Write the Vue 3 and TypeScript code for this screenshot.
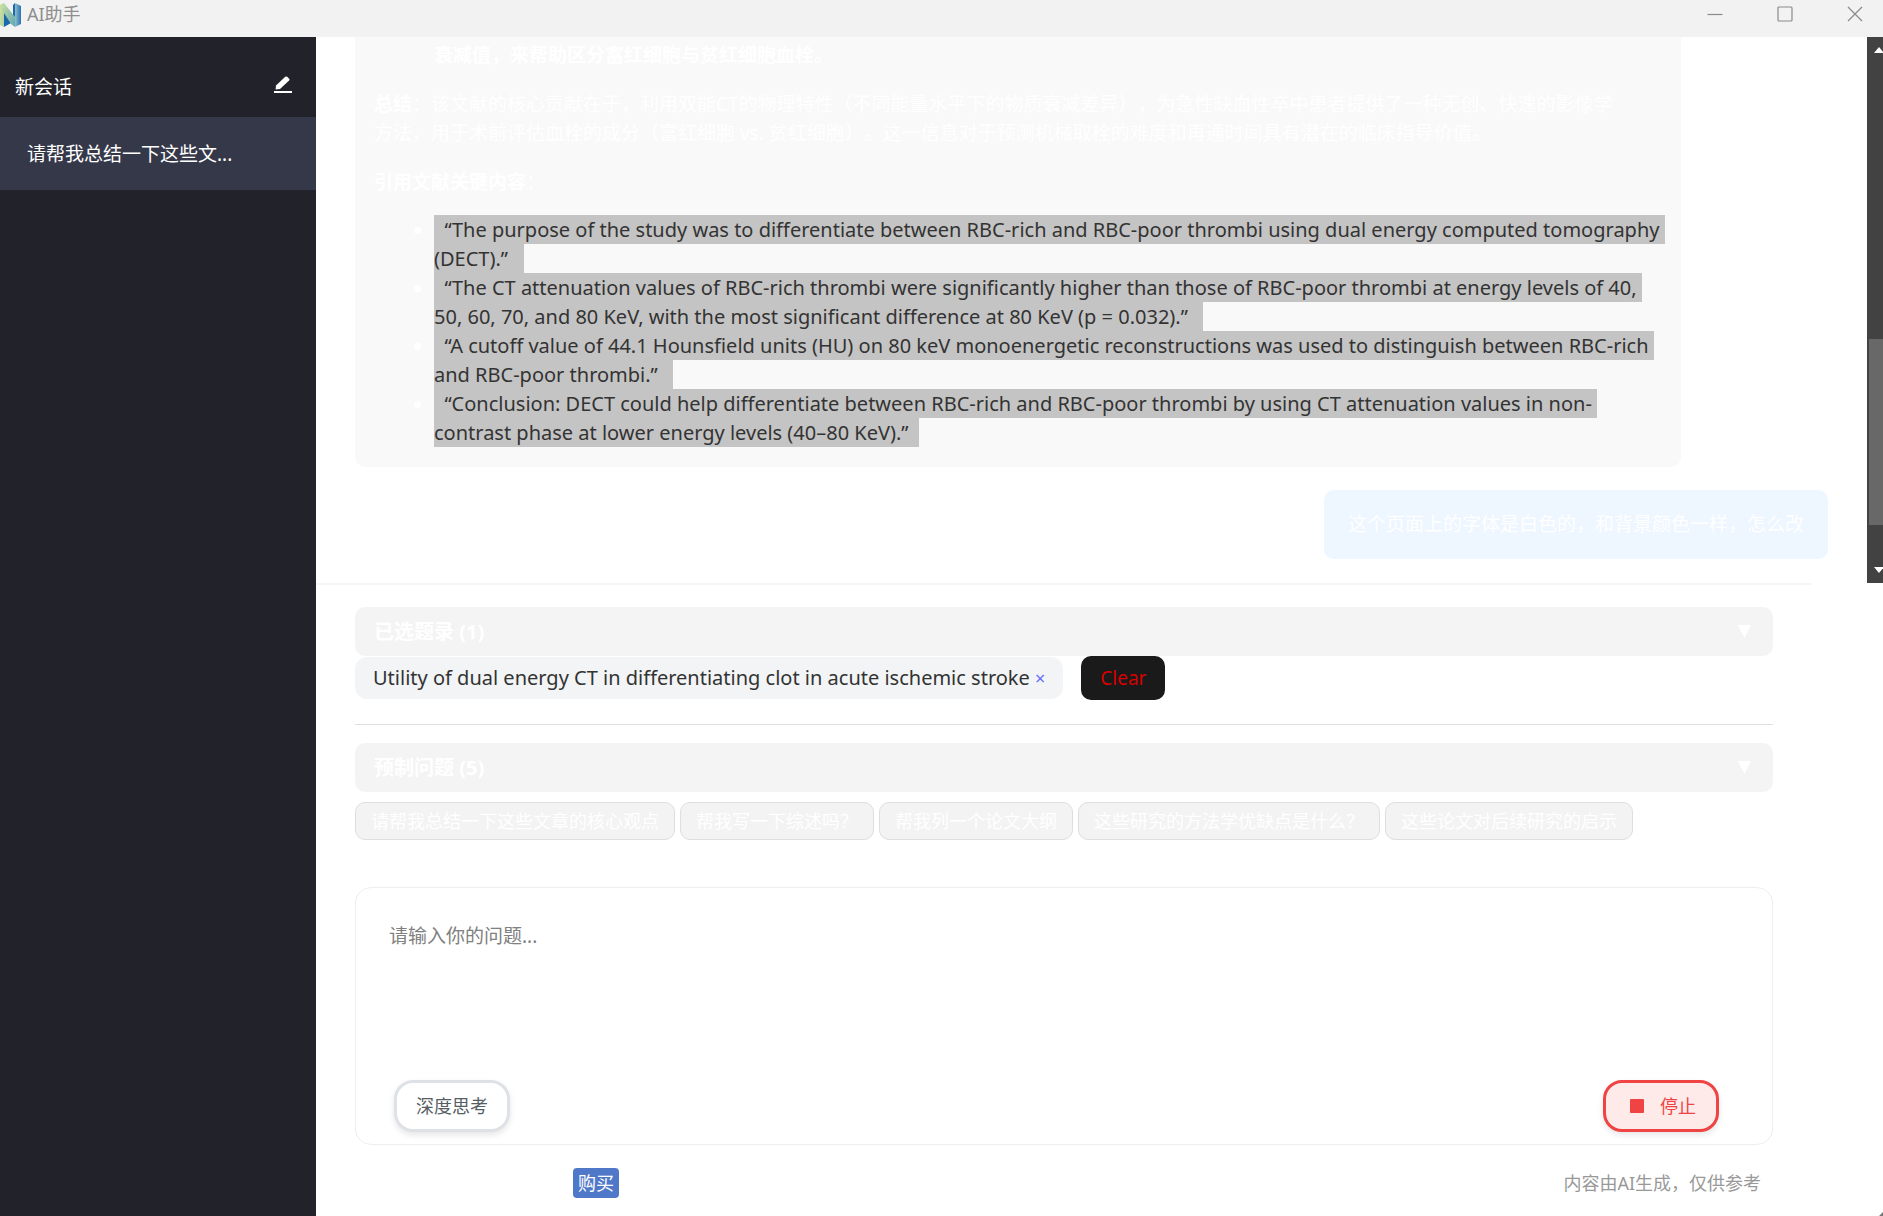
<script setup lang="ts">
import { ref } from 'vue'

interface Quote {
  lines: string[]
}

const nb = '\u00a0'

const quotes: Quote[] = [
  {
    lines: [
      `${nb}${nb}“The purpose of the study was to differentiate between RBC-rich and RBC-poor thrombi using dual energy computed tomography${nb}`,
      `(DECT).”${nb}${nb}${nb}`,
    ],
  },
  {
    lines: [
      `${nb}${nb}“The CT attenuation values of RBC-rich thrombi were significantly higher than those of RBC-poor thrombi at energy levels of 40,${nb}`,
      `50, 60, 70, and 80 KeV, with the most significant difference at 80 KeV (p = 0.032).”${nb}${nb}${nb}`,
    ],
  },
  {
    lines: [
      `${nb}${nb}“A cutoff value of 44.1 Hounsfield units (HU) on 80 keV monoenergetic reconstructions was used to distinguish between RBC-rich${nb}`,
      `and RBC-poor thrombi.”${nb}${nb}${nb}`,
    ],
  },
  {
    lines: [
      `${nb}${nb}“Conclusion: DECT could help differentiate between RBC-rich and RBC-poor thrombi by using CT attenuation values in non-${nb}`,
      `contrast phase at lower energy levels (40–80 KeV).”${nb}${nb}`,
    ],
  },
]

const presets: string[] = [
  '请帮我总结一下这些文章的核心观点',
  '帮我写一下综述吗？',
  '帮我列一个论文大纲',
  '这些研究的方法学优缺点是什么？',
  '这些论文对后续研究的启示',
]

const question = ref('')
</script>

<template>
  <div class="window">
    <header class="titlebar">
      <svg class="logo" width="21" height="26" viewBox="0 0 21 26" aria-hidden="true">
        <defs>
          <linearGradient id="lg-left" x1="0" y1="0" x2="1" y2="1">
            <stop offset="0" stop-color="#d3e3a0" />
            <stop offset="1" stop-color="#a9d0a2" />
          </linearGradient>
          <linearGradient id="lg-diag" x1="0" y1="0" x2="1" y2="1">
            <stop offset="0" stop-color="#cfe2a2" />
            <stop offset="1" stop-color="#5fa8b4" />
          </linearGradient>
          <linearGradient id="lg-right" x1="0" y1="0" x2="1" y2="0">
            <stop offset="0" stop-color="#8fc0c8" />
            <stop offset="1" stop-color="#2a72b5" />
          </linearGradient>
        </defs>
        <path d="M4 10 L11 18 L11 22 L4 26 Z" fill="#1c68ad" />
        <path d="M13 4 L15 2 L15 16 L13 15 Z" fill="#1c68ad" />
        <path d="M0 4 L4 2 L4 26 L0 24 Z" fill="url(#lg-left)" />
        <path d="M0 4 L4 2 L15 16 L15 26 L11 23 L4 12 Z" fill="url(#lg-diag)" />
        <path d="M15 2 L21 5 L21 23 L15 26 Z" fill="url(#lg-right)" />
      </svg>
      <h1>AI助手</h1>
      <div class="win-controls">
        <button type="button" aria-label="最小化">
          <svg width="16" height="16" viewBox="0 0 16 16"><path d="M0.5 8.5 H15.5" /></svg>
        </button>
        <button type="button" aria-label="最大化">
          <svg width="16" height="16" viewBox="0 0 16 16"><rect x="1" y="1" width="14" height="14" rx="1" /></svg>
        </button>
        <button type="button" aria-label="关闭">
          <svg width="16" height="16" viewBox="0 0 16 16"><path d="M1 1 L15 15 M15 1 L1 15" /></svg>
        </button>
      </div>
    </header>

    <div class="body">
      <aside class="sidebar">
        <div class="new-chat">
          <span>新会话</span>
          <button type="button" aria-label="新建会话">
            <svg width="20" height="20" viewBox="0 0 20 20">
              <path d="M3 10.5 L12.2 1.8 Q13.2 1 14.2 1.8 L16.2 3.7 Q17 4.6 16.1 5.5 L7 14 L2.6 14.4 Z" />
              <rect x="1" y="16" width="18" height="2" />
            </svg>
          </button>
        </div>
        <a class="session" href="#session">请帮我总结一下这些文...</a>
      </aside>

      <main class="main">
        <section class="chat">
          <div class="messages">
            <article class="assistant">
              <p class="cont"><strong>衰减值，来帮助区分富红细胞与贫红细胞血栓。</strong></p>
              <p>
                <strong>总结</strong>：该文献的核心贡献在于，利用双能CT的物理特性（不同能量水平下的物质衰减差异），为急性缺血性卒中患者提供了一种无创、快速的影像学<br />方法，用于术前评估血栓的成分（富红细胞 vs. 贫红细胞）。这一信息对于预测机械取栓的难度和再通时间具有潜在的临床指导价值。
              </p>
              <p class="list-title"><strong>引用文献关键内容</strong>：</p>
              <ul>
                <li v-for="(q, i) in quotes" :key="i">
                  <span v-for="line in q.lines" :key="line" class="selected">{{ line }}</span>
                </li>
              </ul>
            </article>
            <article class="user">这个页面上的字体是白色的，和背景颜色一样，怎么改</article>
          </div>
          <div class="scrollbar" aria-hidden="true">
            <svg class="arrow" width="16" height="24" viewBox="0 0 16 24"><path d="M7 16 L12 10 L17 16 Z" /></svg>
            <div class="track"><div class="thumb"></div></div>
            <svg class="arrow" width="16" height="24" viewBox="0 0 16 24"><path d="M7 8 L12 14 L17 8 Z" /></svg>
          </div>
        </section>

        <section class="composer">
          <div class="divider"></div>
          <div class="panel-head">
            <strong>已选题录 (1)</strong>
            <svg width="13" height="13" viewBox="0 0 13 13" aria-hidden="true"><path d="M0 0 H13 L6.5 13 Z" /></svg>
          </div>
          <div class="records">
            <span class="tag">
              Utility of dual energy CT in differentiating clot in acute ischemic stroke
              <a href="#remove" aria-label="移除">×</a>
            </span>
            <button type="button" class="clear">Clear</button>
          </div>
          <hr />
          <div class="panel-head">
            <strong>预制问题 (5)</strong>
            <svg width="13" height="13" viewBox="0 0 13 13" aria-hidden="true"><path d="M0 0 H13 L6.5 13 Z" /></svg>
          </div>
          <div class="presets">
            <button v-for="p in presets" :key="p" type="button">{{ p }}</button>
          </div>
          <div class="input-box">
            <textarea v-model="question" aria-label="问题" placeholder="请输入你的问题..."></textarea>
            <div class="actions">
              <button type="button" class="think">深度思考</button>
              <button type="button" class="stop"><i class="square"></i>停止</button>
            </div>
          </div>
          <footer class="foot">
            <a class="buy" href="#buy">购买</a>
            <span>内容由AI生成，仅供参考</span>
          </footer>
          <svg class="grip" width="4" height="4" viewBox="0 0 4 4" aria-hidden="true"><path d="M4 0 V4 H0 Z" /></svg>
        </section>
      </main>
    </div>
  </div>
</template>

<style>
body {
  margin: 0;
}
</style>

<style scoped>
.window {
  display: flex;
  flex-direction: column;
  height: 100vh;
  overflow: hidden;
  background: #fff;
  color: #fff;
  font-family: "Noto Sans", "Noto Sans CJK SC", sans-serif;
  font-size: 19px;
  line-height: 29px;
  text-spacing-trim: space-all;
}
.window *,
.window {
  box-sizing: border-box;
}
button {
  margin: 0;
  padding: 0;
  border: 0;
  background: none;
  font: inherit;
  line-height: 24px;
  color: inherit;
}
a {
  color: inherit;
  text-decoration: none;
}

.titlebar {
  display: flex;
  flex: none;
  align-items: center;
  height: 37px;
  padding-bottom: 9px;
  background: #f2f2f2;
}
h1 {
  flex: 1;
  margin: 0 0 0 6px;
  color: #8e8e8e;
  font-size: 18px;
  font-weight: 400;
  line-height: 24px;
}
.win-controls {
  display: flex;
  gap: 14px;
}
.win-controls button {
  display: flex;
  align-items: center;
  justify-content: center;
  width: 56px;
  height: 28px;
}
.win-controls svg {
  fill: none;
  stroke: #8a8a8a;
  stroke-width: 1.2;
}

.body {
  display: flex;
  flex: 1;
  min-height: 0;
}
.sidebar {
  flex: none;
  width: 316px;
  background: #22222a;
}
.new-chat {
  display: flex;
  align-items: center;
  justify-content: space-between;
  height: 80px;
  padding: 21px 23px 0 15px;
}
.new-chat button {
  display: flex;
  padding-bottom: 5px;
}
.new-chat svg {
  fill: #fff;
}
.session {
  display: block;
  height: 73px;
  padding: 23px 27px;
  background: #353849;
}

.main {
  display: flex;
  flex: 1;
  flex-direction: column;
  min-width: 0;
}
.chat {
  display: flex;
  flex: 1;
  min-height: 0;
}
.messages {
  display: flex;
  flex: 1;
  flex-direction: column;
  justify-content: flex-end;
  gap: 23px;
  min-width: 0;
  padding: 0 39px 24px;
  overflow: hidden;
}
.assistant {
  flex: none;
  align-self: flex-start;
  width: 90%;
  padding: 20px 19px;
  border-radius: 10px;
  background: #f9f9f9;
  white-space: nowrap;
}
p {
  margin: 0 0 20px;
}
.list-title {
  margin-bottom: 18px;
}
.cont {
  padding-left: 60px;
}
ul {
  margin: 0;
  padding: 0 0 0 60px;
}
li::marker {
  color: #fff;
}
.selected {
  display: block;
  width: fit-content;
  height: 29px;
  background: #c4c4c4;
  color: #333;
  font-size: 20px;
}
.user {
  flex: none;
  align-self: flex-end;
  padding: 20px 24px;
  border-radius: 10px;
  background: #eef6ff;
}
.scrollbar {
  display: flex;
  flex: none;
  flex-direction: column;
  width: 16px;
  background: #424242;
}
.arrow {
  flex: none;
  fill: #fff;
}
.track {
  display: flex;
  flex: 1;
  flex-direction: column;
  justify-content: flex-end;
  padding: 0 0 34px 2px;
}
.thumb {
  height: 40%;
  background: #686868;
}

.composer {
  position: relative;
  flex: none;
  padding: 0 110px 18px 39px;
}
.divider {
  height: 2px;
  margin: 0 -38px 22px -39px;
  background: #f5f5f5;
}
.panel-head {
  display: flex;
  align-items: center;
  justify-content: space-between;
  height: 49px;
  padding: 0 22px 0 19px;
  border-radius: 10px;
  background: #f4f4f4;
  font-size: 20px;
}
.panel-head svg {
  fill: #fff;
}
.records {
  display: flex;
  align-items: center;
  gap: 18px;
}
.tag {
  padding: 7px 18px;
  border-radius: 12px;
  background: #f2f4f6;
  color: #333;
  font-size: 20px;
  line-height: 28px;
}
.tag a {
  color: #646cff;
  font-size: 18px;
}
.clear {
  padding: 10px 19px;
  border-radius: 10px;
  background: #1a1a1a;
  color: #d80000;
}
hr {
  height: 1px;
  margin: 24px 0 18px;
  border: 0;
  background: #e0e0e0;
}
.presets {
  display: flex;
  gap: 5px;
  margin-top: 10px;
}
.presets button {
  height: 38px;
  padding: 0 15px;
  border: 1px solid #dedede;
  border-radius: 10px;
  background: #f3f3f3;
  font-size: 18px;
}
.input-box {
  display: flex;
  flex-direction: column;
  margin-top: 47px;
  padding: 34px 53px 12px 33px;
  border: 1px solid #eee;
  border-radius: 16px;
}
textarea {
  height: 140px;
  margin: 0 0 18px;
  padding: 0;
  border: 0;
  outline: 0;
  resize: none;
  background: transparent;
  color: #333;
  font: inherit;
}
textarea::placeholder {
  color: #808080;
}
.actions {
  display: flex;
  justify-content: space-between;
  padding-left: 5px;
}
.actions button {
  display: flex;
  align-items: center;
  justify-content: center;
  gap: 16px;
  width: 116px;
  height: 52px;
  border: 3px solid #dee2e6;
  border-radius: 19px;
  background: #fff;
  box-shadow: 0 3px 6px rgba(0, 0, 0, 0.1);
  color: #565d64;
  font-size: 18px;
}
.actions .stop {
  padding-left: 4px;
  border-color: #f04444;
  background: #ffeaea;
  color: #f04444;
}
.square {
  width: 14px;
  height: 14px;
  border-radius: 1px;
  background: #f04444;
}
.foot {
  display: flex;
  align-items: center;
  justify-content: space-between;
  margin-top: 23px;
  padding: 0 12px 0 218px;
  color: #999;
  font-size: 18px;
}
.buy {
  padding: 1px 5px 0;
  border-radius: 4px;
  background: #5078c8;
  color: #fff;
}
.grip {
  position: absolute;
  right: 0;
  bottom: 0;
  fill: #777;
}
</style>
